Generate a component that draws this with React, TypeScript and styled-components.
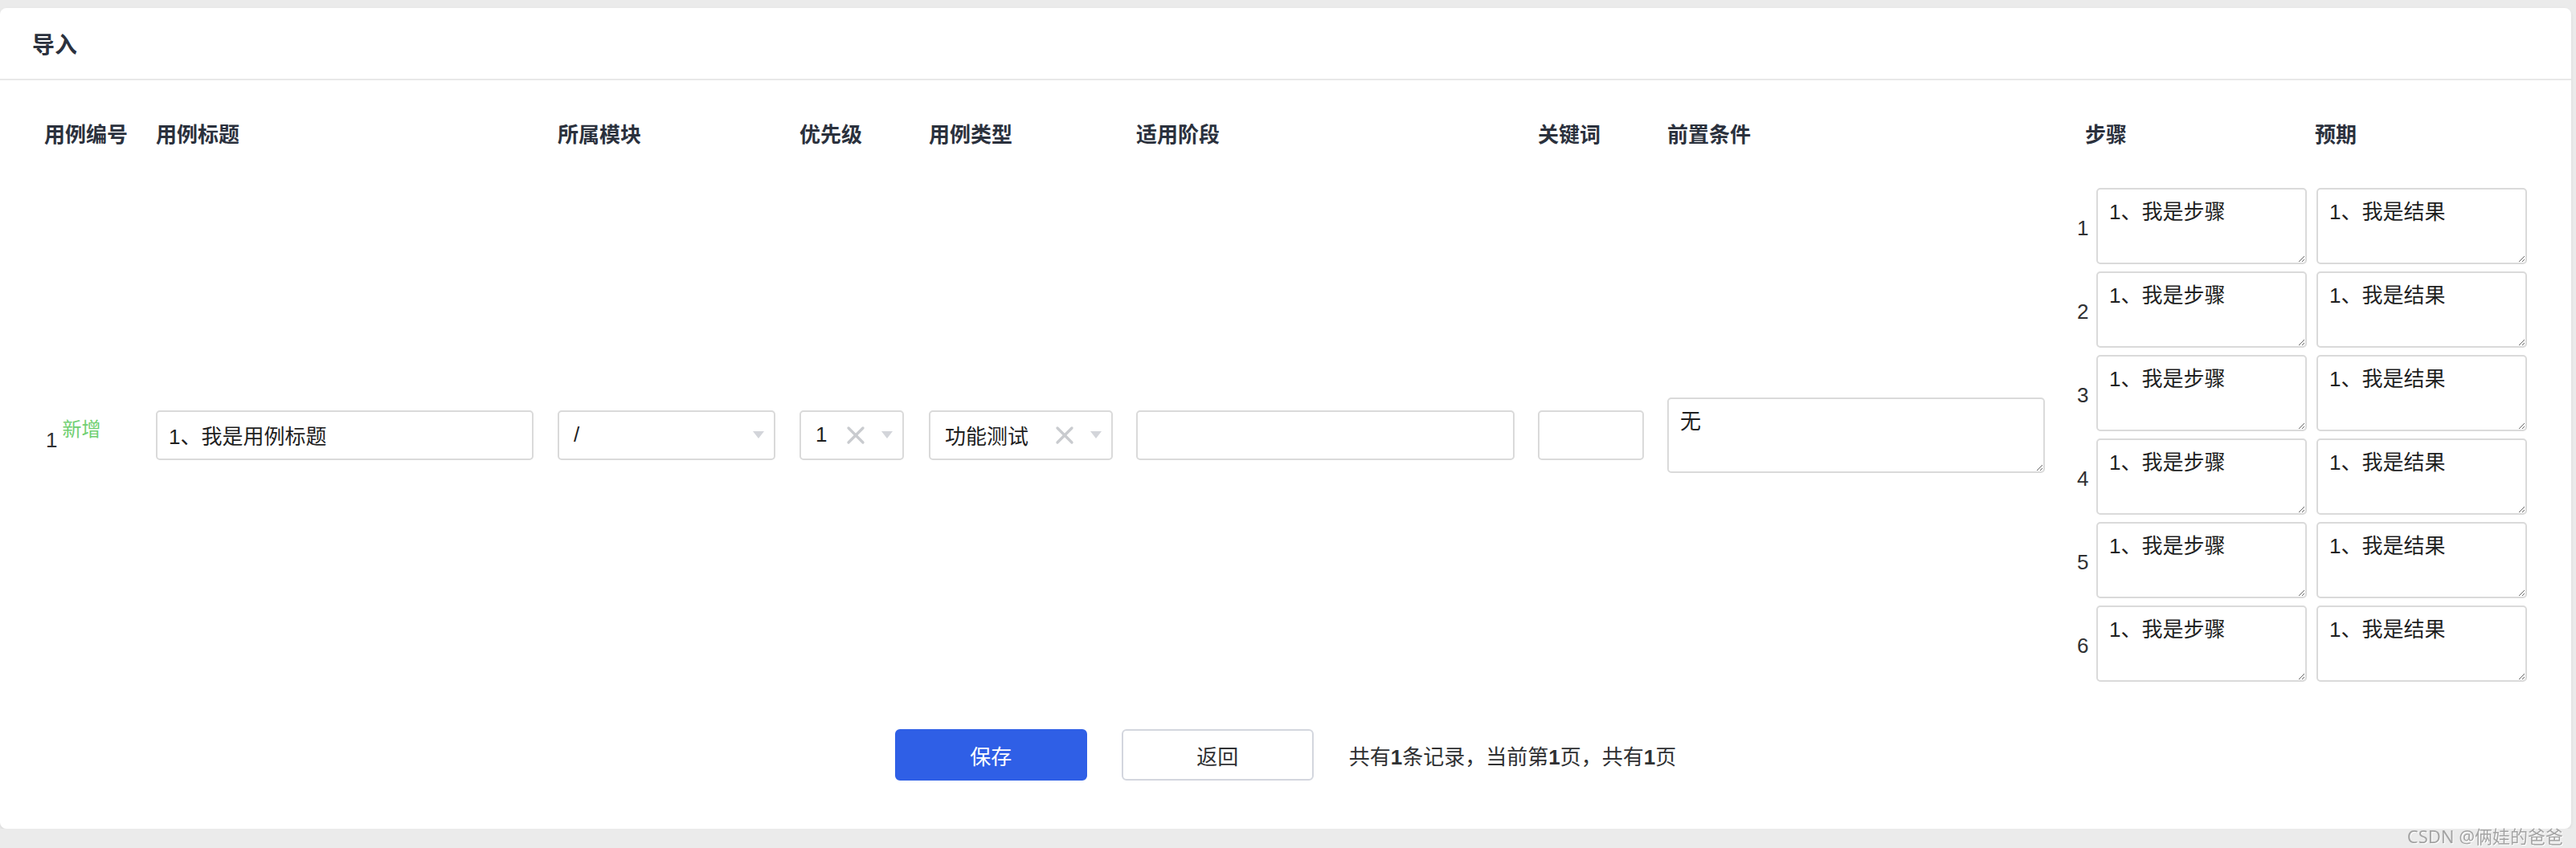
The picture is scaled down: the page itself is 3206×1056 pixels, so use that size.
import { createGlobalStyle } from 'styled-components';
import styled from 'styled-components';
import { X } from 'lucide-react';
import { Fragment } from 'react';

const GlobalStyle = createGlobalStyle`
  body {
    margin: 0;
    background: #ebebeb;
    font-family: 'Liberation Sans', 'Noto Sans CJK SC', sans-serif;
    color: #303133;
  }
`;

const Columns = '139px 500px 301px 161px 258px 500px 161px 510px 296px 1fr';

const Card = styled.div`
  margin-top: 10px;
  width: 3200px;
  height: 1022px;
  background: #fff;
  border-radius: 8px;
  box-shadow: 0 2px 4px rgba(0, 0, 0, 0.08);
  display: flex;
  flex-direction: column;
`;

const Header = styled.div`
  height: 88px;
  display: flex;
  align-items: center;
  padding-left: 40px;
  font-size: 28px;
  font-weight: 600;
  color: #2b313d;
  border-bottom: 2px solid #e8e8e8;
`;

const Body = styled.div`
  padding: 50px 0 0 55px;
`;

const HeadRow = styled.div`
  display: grid;
  grid-template-columns: ${Columns};
  height: 36px;
  line-height: 36px;
  font-size: 26px;
  font-weight: 600;
  color: #2b313d;
`;

const HeadCell = styled.div<{ $indent?: number }>`
  padding-left: ${(p) => p.$indent ?? 0}px;
  white-space: nowrap;
`;

const DataRow = styled.div`
  display: grid;
  grid-template-columns: ${Columns};
  align-items: center;
  margin-top: 48px;
`;

const NumberCell = styled.div`
  font-size: 26px;
  color: #303133;
  padding-left: 2px;
`;

const Tag = styled.sup`
  font-size: 24px;
  color: #6fcf71;
  margin-left: 6px;
  position: relative;
  top: -4px;
`;

const TextInput = styled.input<{ $width: number }>`
  box-sizing: border-box;
  width: ${(p) => p.$width}px;
  height: 62px;
  border: 2px solid #dadada;
  border-radius: 5px;
  padding: 0 14px;
  font-size: 26px;
  font-family: 'Liberation Sans', 'Noto Sans CJK SC', sans-serif;
  color: #1f1f1f;
  outline: none;
  background: #fff;
`;

const SelectBox = styled.div<{ $width: number }>`
  box-sizing: border-box;
  width: ${(p) => p.$width}px;
  height: 62px;
  border: 2px solid #dadada;
  border-radius: 5px;
  padding: 0 12px 0 18px;
  display: flex;
  align-items: center;
  font-size: 26px;
  color: #1f1f1f;
`;

const SelectValue = styled.span`
  flex: 1;
  white-space: nowrap;
`;

const Clear = styled(X)`
  color: #c9cbcf;
  margin-right: 14px;
  flex-shrink: 0;
`;

const Arrow = styled.span`
  width: 0;
  height: 0;
  border-left: 7px solid transparent;
  border-right: 7px solid transparent;
  border-top: 9px solid #d3d5da;
  flex-shrink: 0;
`;

const Area = styled.textarea<{ $width: number; $height: number }>`
  box-sizing: border-box;
  display: block;
  width: ${(p) => p.$width}px;
  height: ${(p) => p.$height}px;
  border: 2px solid #dadada;
  border-radius: 5px;
  padding: 8px 14px;
  font-size: 26px;
  line-height: 40px;
  font-family: 'Liberation Sans', 'Noto Sans CJK SC', sans-serif;
  color: #1f1f1f;
  outline: none;
  resize: both;
`;

const StepsCell = styled.div`
  grid-column: 9 / 11;
  display: grid;
  grid-template-columns: 12px 262px 262px;
  column-gap: 12px;
  row-gap: 9px;
  align-items: center;
`;

const StepIndex = styled.div`
  font-size: 26px;
  color: #303133;
  padding-top: 6px;
`;

const Footer = styled.div`
  display: flex;
  justify-content: center;
  align-items: center;
  gap: 43px;
  margin-top: 59px;
`;

const Button = styled.button<{ $primary?: boolean }>`
  box-sizing: border-box;
  width: 239px;
  height: 64px;
  border-radius: 6px;
  border: 2px solid ${(p) => (p.$primary ? '#2f5fe6' : '#d3d6de')};
  background: ${(p) => (p.$primary ? '#2f5fe6' : '#fff')};
  color: ${(p) => (p.$primary ? '#fff' : '#303133')};
  font-size: 26px;
  font-family: 'Liberation Sans', 'Noto Sans CJK SC', sans-serif;
`;

const PageInfo = styled.div`
  font-size: 26px;
  color: #303133;
  margin-left: 1px;

  b {
    font-weight: 700;
  }
`;

const Watermark = styled.div`
  position: fixed;
  right: 16px;
  top: 1024px;
  font-size: 22px;
  color: #a4a4a4;
  text-shadow: 1px 1px 0 #fff;
  font-family: 'Noto Sans', 'Noto Sans CJK SC', sans-serif;
  white-space: nowrap;
`;

const steps = [1, 2, 3, 4, 5, 6];

export default function App() {
  return (
    <>
      <GlobalStyle />
      <Card>
        <Header>导入</Header>
        <Body>
          <HeadRow>
            <HeadCell>用例编号</HeadCell>
            <HeadCell>用例标题</HeadCell>
            <HeadCell>所属模块</HeadCell>
            <HeadCell>优先级</HeadCell>
            <HeadCell>用例类型</HeadCell>
            <HeadCell>适用阶段</HeadCell>
            <HeadCell>关键词</HeadCell>
            <HeadCell>前置条件</HeadCell>
            <HeadCell $indent={10}>步骤</HeadCell>
            <HeadCell>预期</HeadCell>
          </HeadRow>
          <DataRow>
            <NumberCell>
              1<Tag>新增</Tag>
            </NumberCell>
            <div>
              <TextInput $width={470} defaultValue="1、我是用例标题" readOnly />
            </div>
            <div>
              <SelectBox $width={271}>
                <SelectValue>/</SelectValue>
                <Arrow />
              </SelectBox>
            </div>
            <div>
              <SelectBox $width={130}>
                <SelectValue>1</SelectValue>
                <Clear size={36} strokeWidth={2.2} />
                <Arrow />
              </SelectBox>
            </div>
            <div>
              <SelectBox $width={229}>
                <SelectValue>功能测试</SelectValue>
                <Clear size={36} strokeWidth={2.2} />
                <Arrow />
              </SelectBox>
            </div>
            <div>
              <TextInput $width={471} defaultValue="" readOnly />
            </div>
            <div>
              <TextInput $width={132} defaultValue="" readOnly />
            </div>
            <div>
              <Area $width={470} $height={94} defaultValue="无" readOnly />
            </div>
            <StepsCell>
              {steps.map((n) => (
                <Fragment key={n}>
                  <StepIndex>{n}</StepIndex>
                  <Area $width={262} $height={95} defaultValue="1、我是步骤" readOnly />
                  <Area $width={262} $height={95} defaultValue="1、我是结果" readOnly />
                </Fragment>
              ))}
            </StepsCell>
          </DataRow>
        </Body>
        <Footer>
          <Button $primary>保存</Button>
          <Button>返回</Button>
          <PageInfo>
            共有<b>1</b>条记录，当前第<b>1</b>页，共有<b>1</b>页
          </PageInfo>
        </Footer>
      </Card>
      <Watermark>CSDN @俩娃的爸爸</Watermark>
    </>
  );
}
